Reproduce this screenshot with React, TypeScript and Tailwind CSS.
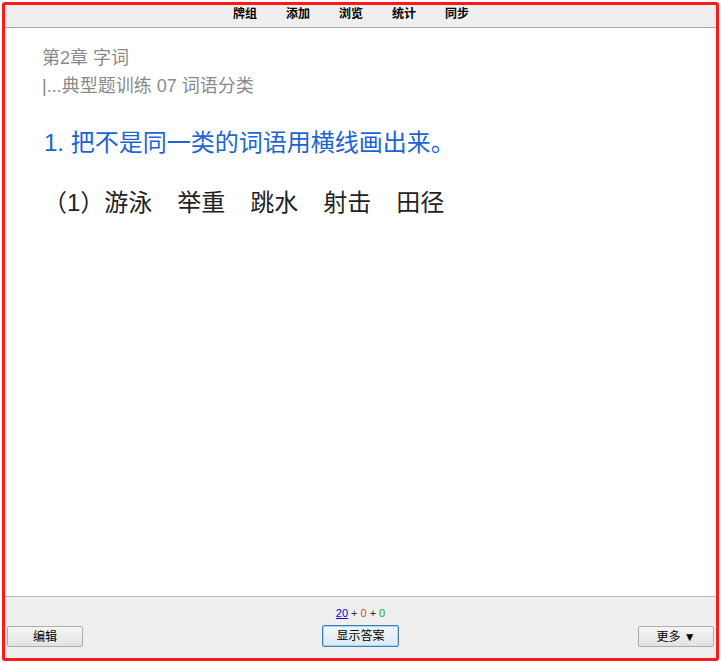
import React from 'react';

const navItems = ['牌组', '添加', '浏览', '统计', '同步'];
const words = ['游泳', '举重', '跳水', '射击', '田径'];

const cjk = { fontFamily: '"Liberation Sans", "Noto Sans CJK SC", sans-serif' };

export default function App() {
	return (
		<div className="w-[721px] h-[663px] bg-white p-[2px]" style={cjk}>
			<div className="flex flex-col h-full border-[3px] border-[#ff1a1a] rounded-[3px] overflow-hidden">
				<div className="h-[23px] bg-[#efefef] border-b border-[#a9a9a9] flex justify-center items-start pt-[1px] pr-[19px] gap-[28px] text-[12px] font-bold text-black">
					{navItems.map((n) => (
						<span key={n} className="w-[25px] text-center leading-[16px]">
							{n}
						</span>
					))}
				</div>

				<div className="flex-1 pl-[37px] pt-[16px]">
					<div className="text-[18px] leading-[28px] text-[#8a8a8a]">第2章 字词</div>
					<div className="text-[18px] leading-[28px] text-[#8a8a8a]">|...典型题训练 07 词语分类</div>
					<div className="mt-[27px] ml-[2px] text-[24px] leading-[32px] text-[#1c64d4]">
						1. 把不是同一类的词语用横线画出来。
					</div>
					<div className="mt-[28px] ml-[1px] flex text-[24px] leading-[32px] text-[#222]">
						<span>（1）</span>
						<div className="flex gap-[25px]">
							{words.map((w) => (
								<span key={w}>{w}</span>
							))}
						</div>
					</div>
				</div>

				<div className="h-[62px] bg-[#efefef] border-t border-[#b5b5b5] flex flex-col">
					<div className="h-[29px] flex justify-center items-center text-[11px] pt-[3px]">
						<span className="text-[#0000cc] underline">20</span>
						<span className="text-[#333] mx-[3px]">+</span>
						<span className="text-[#c35617]">0</span>
						<span className="text-[#333] mx-[3px]">+</span>
						<span className="text-[#22aa22]">0</span>
					</div>
					<div className="flex justify-between items-start px-[2px]">
						<button className="w-[76px] h-[21px] text-[12px] border border-[#adadad] rounded-[2px] bg-gradient-to-b from-[#f6f6f6] to-[#e2e2e2] text-black">
							编辑
						</button>
						<button className="w-[77px] h-[22px] -mt-[1px] text-[12px] border border-[#3c7fb1] rounded-[2px] bg-gradient-to-b from-[#f3f9fd] to-[#dbe9f4] text-black shadow-[inset_0_0_0_1px_#a9d4f0]">
							显示答案
						</button>
						<button className="w-[76px] h-[21px] text-[12px] border border-[#adadad] rounded-[2px] bg-gradient-to-b from-[#f6f6f6] to-[#e2e2e2] text-black">
							更多 ▼
						</button>
					</div>
				</div>
			</div>
		</div>
	);
}
